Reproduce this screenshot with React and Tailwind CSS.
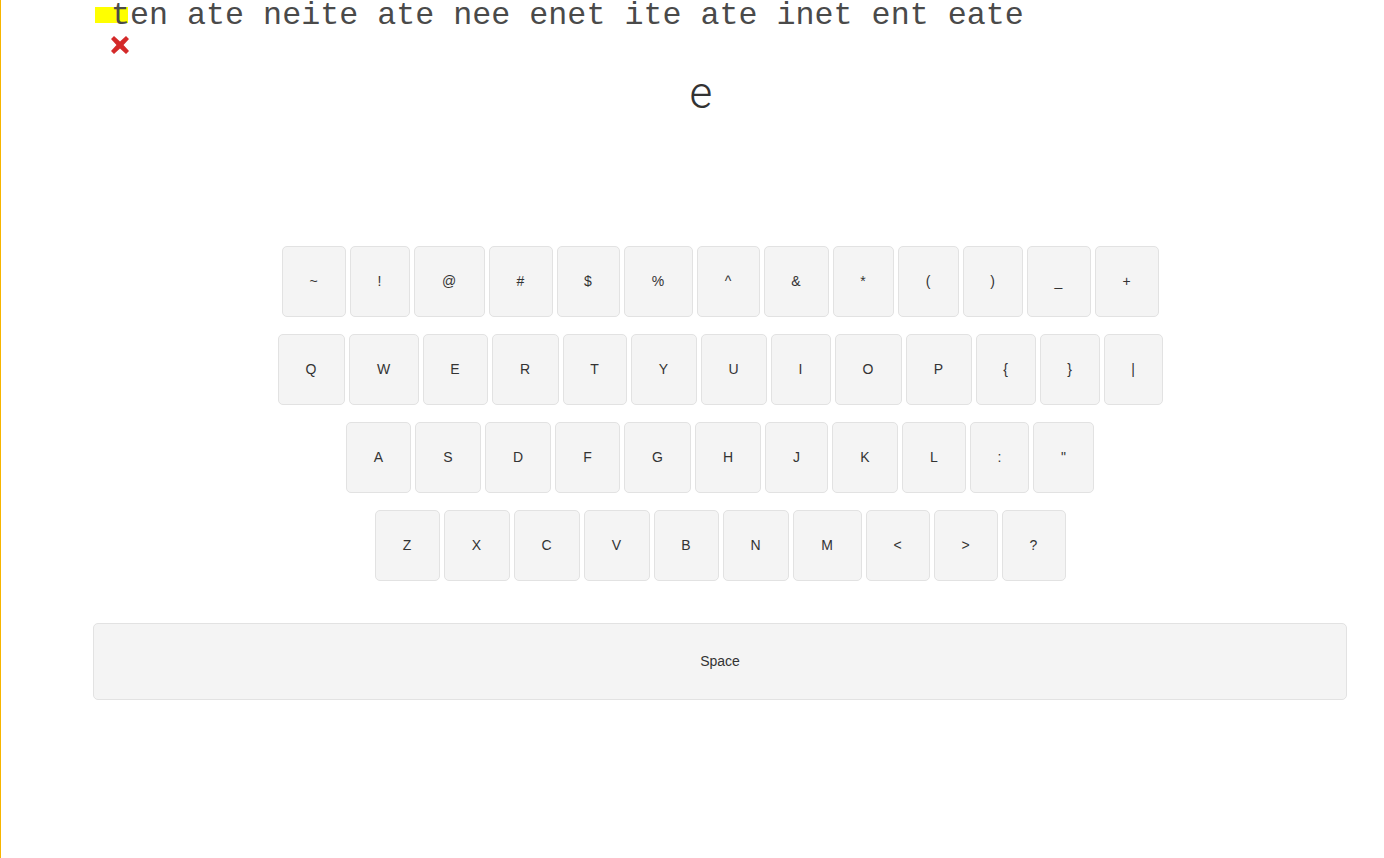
import React from "react";

const rows = [
  [["~",64],["!",60],["@",71],["#",64],["$",63],["%",69],["^",63],["&",65],["*",61],["(",61],[")",60],["_",64],["+",64]],
  [["Q",67],["W",70],["E",65],["R",67],["T",64],["Y",66],["U",66],["I",60],["O",67],["P",66],["{",60],["}",60],["|",59]],
  [["A",65],["S",66],["D",66],["F",65],["G",67],["H",66],["J",63],["K",66],["L",64],[":",59],["\"",61]],
  [["Z",65],["X",66],["C",66],["V",66],["B",65],["N",66],["M",69],["<",64],[">",64],["?",64]],
];

function Key({ label, w }) {
  return (
    <div
      className="h-[71px] flex items-center justify-center bg-[#f4f4f4] border border-[#e2e2e2] rounded-[5px] text-[14px] text-[#333] shrink-0"
      style={{ width: w }}
    >
      {label}
    </div>
  );
}

export default function App() {
  return (
    <div className="min-h-[858px] w-full bg-white border-l border-[#f7b500] font-['Liberation_Sans',Arial,sans-serif]">
      <div className="ml-[92px] w-[1254px]">
        <div className="relative h-[33px]">
          <div className="absolute left-[2px] top-[7px] w-[33px] h-[16px] bg-[#ffff00]" />
          <div className="relative pl-[18px] font-['Liberation_Mono','Courier_New',monospace] text-[31.7px] leading-[32px] text-[#4a4a4a] whitespace-pre">
            ten ate neite ate nee enet ite ate inet ent eate
          </div>
        </div>
        <div className="pl-[18px] pt-[3px] h-[24px]">
          <svg width="18" height="18" viewBox="0 0 18 18">
            <path
              d="M3 0 L9 5.5 L15 0 L18 3 L12.5 9 L18 15 L15 18 L9 12.5 L3 18 L0 15 L5.5 9 L0 3 Z"
              fill="#d42a2a"
            />
          </svg>
        </div>
        <div className="mt-[14px] pr-[38px] text-center font-['Roboto',sans-serif] font-light text-[44px] leading-[44px] text-[#333]">
          e
        </div>
        <div className="mt-[131px] flex flex-col gap-[17px]">
          {rows.map((r, i) => (
            <div key={i} className="flex justify-center gap-[4px]">
              {r.map(([l, w]) => (
                <Key key={l} label={l} w={w} />
              ))}
            </div>
          ))}
        </div>
        <div className="mt-[42px] h-[77px] w-full flex items-center justify-center bg-[#f4f4f4] border border-[#e2e2e2] rounded-[5px] text-[14px] text-[#333]">
          Space
        </div>
      </div>
    </div>
  );
}
